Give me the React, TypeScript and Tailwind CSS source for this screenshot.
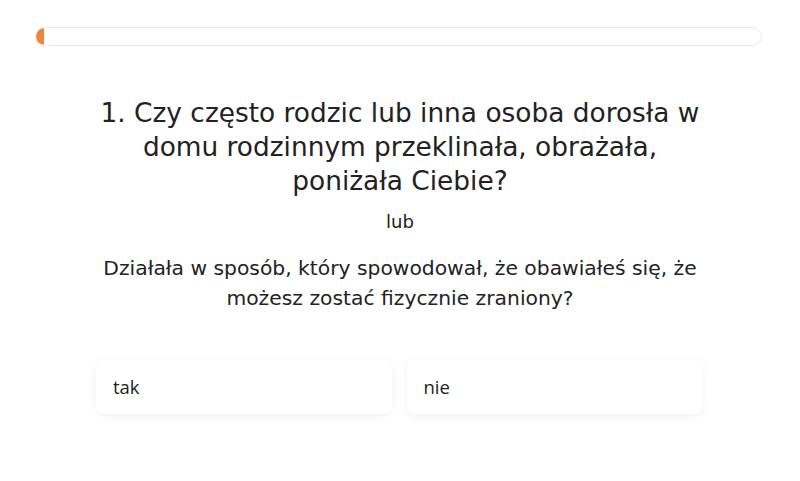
export default function App() {
  return (
    <div className="min-h-[481px] w-full bg-white">
      <div className="px-[35px] pt-[27px]">
        <div className="h-[19px] w-[727px] rounded-full border-[1.5px] border-[#ebebeb] overflow-hidden">
          <div className="h-full w-[8px] rounded-l-full bg-[#f0843a]" />
        </div>
      </div>

      <div className="mx-auto mt-[50px] w-[606px] flex flex-col items-center text-center text-[#222]">
        <h1 className="text-[26.4px] leading-[34px] font-['DejaVu_Sans',sans-serif] font-normal">
          1. Czy często rodzic lub inna osoba dorosła w domu rodzinnym przeklinała, obrażała, poniżała Ciebie?
        </h1>
        <p className="mt-[12px] text-[18px] leading-[24px] font-['DejaVu_Sans',sans-serif]">lub</p>
        <p className="mt-[19px] text-[20.3px] leading-[30px] font-['DejaVu_Sans',sans-serif]">
          Działała w sposób, który spowodował, że obawiałeś się, że możesz zostać fizycznie zraniony?
        </p>
      </div>

      <div className="ml-[96px] mt-[46px] w-[606px] grid grid-cols-2 gap-[15px]">
        {["tak", "nie"].map((t) => (
          <button
            key={t}
            className="h-[55px] rounded-[8px] bg-white px-[17px] text-left text-[18.5px] text-[#222] font-['Open_Sans',sans-serif] shadow-[0_2px_10px_rgba(0,0,0,0.06)]"
          >
            {t}
          </button>
        ))}
      </div>
    </div>
  );
}
